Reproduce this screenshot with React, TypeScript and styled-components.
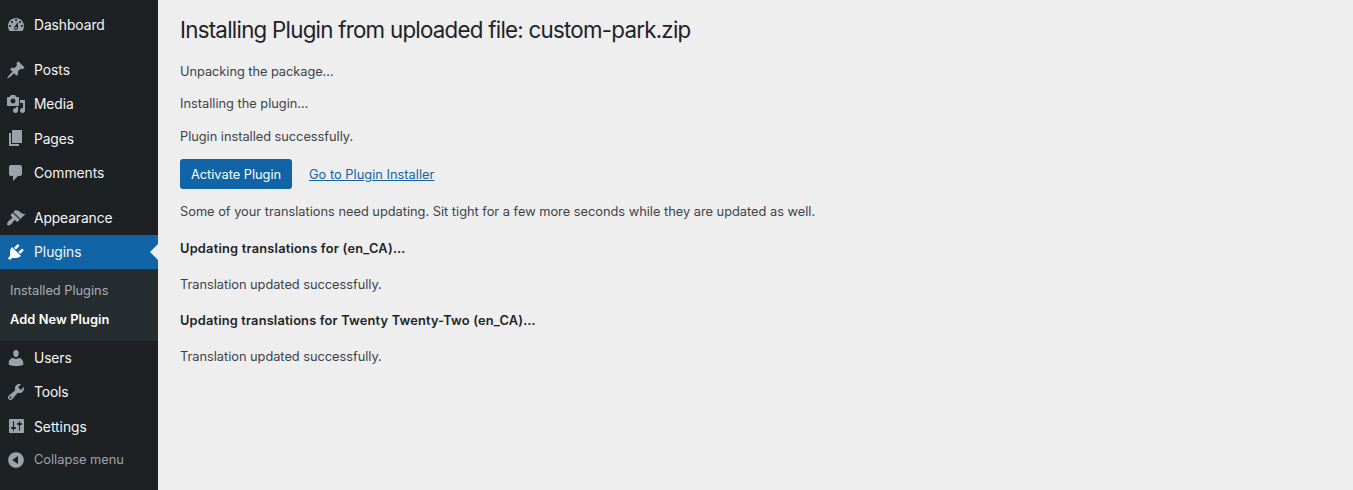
import React from 'react';
import styled, { createGlobalStyle } from 'styled-components';

const GlobalStyle = createGlobalStyle`
  * { box-sizing: border-box; }
  body {
    margin: 0;
    background: #eeeeee;
    color: #3c434a;
    font-family: Inter, "Liberation Sans", sans-serif;
    font-size: 12.8px;
    line-height: 1.4;
    -webkit-font-smoothing: antialiased;
  }
`;

const Page = styled.div`
  display: flex;
  height: 490px;
  overflow: hidden;
`;

const Sidebar = styled.nav`
  flex: none;
  width: 158px;
  padding-top: 7.7px;
  background: #1d2123;
`;

const Separator = styled.div`
  height: 11px;
`;

const Label = styled.span<{ $tracking?: number }>`
  letter-spacing: ${p => p.$tracking ?? 0}px;
`;

const MenuRow = styled.a<{ $current?: boolean; $muted?: boolean }>`
  position: relative;
  display: flex;
  align-items: center;
  height: 34.2px;
  padding-left: 6px;
  gap: 8px;
  white-space: nowrap;
  font-size: ${p => (p.$muted ? 12.8 : 13.8)}px;
  color: ${p => (p.$muted ? '#a0a4a8' : '#f6f6f7')};
  background: ${p => (p.$current ? '#1165a6' : 'transparent')};

  svg {
    flex: none;
    width: 20px;
    height: 20px;
    fill: ${p => (p.$current ? '#ffffff' : '#9ca2a7')};
  }

  ${Label} {
    line-height: 20px;
    padding-top: ${p => (p.$muted ? 0 : 0.5)}px;
  }
`;

const CurrentArrow = styled.i`
  position: absolute;
  right: 0;
  top: 50%;
  margin-top: -8px;
  border: 8px solid transparent;
  border-left-width: 0;
  border-right-color: #eeeeee;
`;

const Submenu = styled.div`
  display: flex;
  flex-direction: column;
  height: 71.8px;
  padding: 7px 0 0 10px;
  background: #262d30;
`;

const SubmenuItem = styled.a<{ $current?: boolean }>`
  height: 29px;
  line-height: 29px;
  white-space: nowrap;
  color: ${p => (p.$current ? '#ffffff' : '#a9adb0')};
  font-weight: ${p => (p.$current ? 600 : 400)};
`;

const Content = styled.main`
  flex: 1;
  padding: 13px 22px 0;
`;

const Title = styled.h1`
  margin: 0;
  height: 34px;
  line-height: 34px;
  font-size: 22.3px;
  font-weight: 400;
  color: #1d2327;
`;

const Message = styled.p<{ $gap: number }>`
  margin: ${p => p.$gap}px 0 0;
  height: 20px;
  line-height: 20px;
`;

const Heading = styled.h2<{ $gap: number }>`
  margin: ${p => p.$gap}px 0 0;
  height: 20px;
  line-height: 20px;
  font-size: 12.8px;
  font-weight: 600;
  color: #1d2327;
`;

const Actions = styled.div`
  display: flex;
  align-items: center;
  gap: 17px;
  margin-top: 12px;
`;

const PrimaryButton = styled.a`
  display: flex;
  align-items: center;
  justify-content: center;
  width: 112px;
  height: 30px;
  padding-top: 2px;
  border-radius: 3px;
  background: #1165a6;
  color: #ffffff;
`;

const TextLink = styled.a`
  padding-top: 2px;
  color: #1165a6;
  text-decoration: underline;
`;

const icons = {
  dashboard:
    'M3.76 16h12.48c1.1-1.37 1.76-3.11 1.76-5 0-4.42-3.58-8-8-8s-8 3.58-8 8c0 1.89.66 3.63 1.76 5zM10 4c.55 0 1 .45 1 1s-.45 1-1 1-1-.45-1-1 .45-1 1-1zM6 6c.55 0 1 .45 1 1s-.45 1-1 1-1-.45-1-1 .45-1 1-1zm8 0c.55 0 1 .45 1 1s-.45 1-1 1-1-.45-1-1 .45-1 1-1zm-5.37 5.55L12 7v6c0 1.1-.9 2-2 2s-2-.9-2-2c0-.57.24-1.08.63-1.45zM4 10c.55 0 1 .45 1 1s-.45 1-1 1-1-.45-1-1 .45-1 1-1zm12 0c.55 0 1 .45 1 1s-.45 1-1 1-1-.45-1-1 .45-1 1-1zm-5 3c0-.55-.45-1-1-1s-1 .45-1 1 .45 1 1 1 1-.45 1-1z',
  posts:
    'M10.44 3.02l1.82-1.82 6.36 6.35-1.83 1.82c-1.05-.68-2.48-.57-3.41.36l-.75.75c-.92.93-1.04 2.35-.35 3.41l-1.83 1.82-2.41-2.41-2.8 2.79c-.42.42-3.38 2.71-3.8 2.29s1.86-3.39 2.28-3.81l2.79-2.79L4.1 9.36l1.83-1.82c1.05.69 2.48.57 3.4-.36l.75-.75c.93-.92 1.05-2.35.36-3.41z',
  media:
    'M13 11V4c0-.55-.45-1-1-1h-1.67L9 1H5L3.67 3H2c-.55 0-1 .45-1 1v7c0 .55.45 1 1 1h10c.55 0 1-.45 1-1zM7 4.5c1.38 0 2.5 1.12 2.5 2.5S8.38 9.5 7 9.5 4.5 8.38 4.5 7 5.62 4.5 7 4.5zM14 6h5v10.5c0 1.38-1.12 2.5-2.5 2.5S14 17.88 14 16.5s1.12-2.5 2.5-2.5c.17 0 .34.02.5.05V9h-3V6zm-4 8.05V13h2v3.5c0 1.38-1.12 2.5-2.5 2.5S7 17.88 7 16.5 8.12 14 9.5 14c.17 0 .34.02.5.05z',
  pages: 'M6 15V2h10v13H6zm-1 1h8v2H3V5h2v11z',
  comments:
    'M5 2h9c1.1 0 2 .9 2 2v7c0 1.1-.9 2-2 2h-2l-5 5v-5H5c-1.1 0-2-.9-2-2V4c0-1.1.9-2 2-2z',
  appearance:
    'M14.48 11.06L7.41 3.99l1.5-1.5c.5-.56 2.3-.47 3.51.32 1.21.8 1.43 1.28 2.91 2.1 1.18.64 2.45 1.26 4.45.85zm-.71.71L6.7 4.7 4.93 6.47c-.39.39-.39 1.02 0 1.41l1.06 1.06c.39.39.39 1.03 0 1.42-.6.6-1.43 1.11-2.21 1.69-.35.26-.7.53-1.01.84C1.43 14.23.4 16.08 1.4 17.07c.99 1 2.84-.03 4.18-1.36.31-.31.58-.66.85-1.02.57-.78 1.08-1.61 1.69-2.21.39-.39 1.02-.39 1.41 0l1.06 1.06c.39.39 1.02.39 1.41 0z',
  plugins:
    'M13.11 4.36L9.87 7.6 8 5.73l3.24-3.24c.35-.34 1.05-.2 1.56.32.52.51.66 1.21.31 1.55zm-8 1.77l.91-1.12 9.01 9.01-1.19.84c-.71.71-2.63 1.16-3.82 1.16H6.14L4.9 17.26c-.59.59-1.54.59-2.12 0-.59-.58-.59-1.53 0-2.12l1.24-1.24v-3.88c0-1.13.4-3.19 1.09-3.89zm7.26 3.97l3.24-3.24c.34-.35 1.04-.21 1.55.31.52.51.66 1.21.31 1.55l-3.24 3.25z',
  users:
    'M10 9.25c-2.27 0-2.73-3.44-2.73-3.44C7 4.02 7.82 2 9.97 2c2.16 0 2.98 2.02 2.71 3.81 0 0-.41 3.44-2.68 3.44zm0 2L12.72 10c2.39 0 4.52 2.33 4.52 4.53v2.49s-3.65 1.13-7.24 1.13c-3.65 0-7.24-1.13-7.24-1.13v-2.49c0-2.25 1.94-4.48 4.47-4.48z',
  tools:
    'M16.68 9.77c-1.34 1.34-3.3 1.67-4.95.99l-5.41 6.52c-.99.99-2.59.99-3.58 0s-.99-2.59 0-3.57l6.52-5.42c-.68-1.65-.35-3.61.99-4.95 1.28-1.28 3.12-1.62 4.72-1.06l-2.89 2.89 2.82 2.82 2.86-2.87c.53 1.58.18 3.39-1.08 4.65zM3.81 16.21c.4.39 1.04.39 1.43 0 .4-.4.4-1.04 0-1.43-.39-.4-1.03-.4-1.43 0-.39.39-.39 1.03 0 1.43z',
  settings:
    'M18 16V4c0-.55-.45-1-1-1H4c-.55 0-1 .45-1 1v12c0 .55.45 1 1 1h13c.55 0 1-.45 1-1zM8 11h1c.55 0 1 .45 1 1s-.45 1-1 1H8v1.5c0 .28-.22.5-.5.5s-.5-.22-.5-.5V13H6c-.55 0-1-.45-1-1s.45-1 1-1h1V5.5c0-.28.22-.5.5-.5s.5.22.5.5V11zm5-2h-1c-.55 0-1-.45-1-1s.45-1 1-1h1V5.5c0-.28.22-.5.5-.5s.5.22.5.5V7h1c.55 0 1 .45 1 1s-.45 1-1 1h-1v5.5c0 .28-.22.5-.5.5s-.5-.22-.5-.5V9z',
  collapse:
    'M10 2.16c4.33 0 7.84 3.51 7.84 7.84s-3.51 7.84-7.84 7.84S2.16 14.33 2.16 10 5.71 2.16 10 2.16zm2 11.72V6.12L6.18 9.97z',
};

type ItemProps = {
  icon: keyof typeof icons;
  label: string;
  tracking?: number;
  current?: boolean;
  muted?: boolean;
};

function MenuItem({ icon, label, tracking, current, muted }: ItemProps) {
  return (
    <MenuRow $current={current} $muted={muted}>
      <svg viewBox="0 0 20 20" aria-hidden="true">
        <path fillRule="evenodd" d={icons[icon]} />
      </svg>
      <Label $tracking={tracking}>{label}</Label>
      {current && <CurrentArrow />}
    </MenuRow>
  );
}

export default function App() {
  return (
    <>
      <GlobalStyle />
      <Page>
        <Sidebar>
          <MenuItem icon="dashboard" label="Dashboard" tracking={-0.05} />
          <Separator />
          <MenuItem icon="posts" label="Posts" />
          <MenuItem icon="media" label="Media" tracking={-0.1} />
          <MenuItem icon="pages" label="Pages" tracking={-0.1} />
          <MenuItem icon="comments" label="Comments" />
          <Separator />
          <MenuItem icon="appearance" label="Appearance" tracking={-0.1} />
          <MenuItem icon="plugins" label="Plugins" current />
          <Submenu>
            <SubmenuItem><Label>Installed Plugins</Label></SubmenuItem>
            <SubmenuItem $current><Label $tracking={0.1}>Add New Plugin</Label></SubmenuItem>
          </Submenu>
          <MenuItem icon="users" label="Users" tracking={-0.1} />
          <MenuItem icon="tools" label="Tools" tracking={-0.1} />
          <MenuItem icon="settings" label="Settings" />
          <MenuItem icon="collapse" label="Collapse menu" muted />
        </Sidebar>
        <Content>
          <Title><Label $tracking={-0.74}>Installing Plugin from uploaded file: custom-park.zip</Label></Title>
          <Message $gap={15}><Label $tracking={-0.04}>Unpacking the package…</Label></Message>
          <Message $gap={12}><Label>Installing the plugin…</Label></Message>
          <Message $gap={13}><Label $tracking={-0.02}>Plugin installed successfully.</Label></Message>
          <Actions>
            <PrimaryButton><Label>Activate Plugin</Label></PrimaryButton>
            <TextLink><Label $tracking={0.03}>Go to Plugin Installer</Label></TextLink>
          </Actions>
          <Message $gap={13}><Label>Some of your translations need updating. Sit tight for a few more seconds while they are updated as well.</Label></Message>
          <Heading $gap={17}><Label $tracking={0.23}>Updating translations for (en_CA)…</Label></Heading>
          <Message $gap={16}><Label $tracking={-0.02}>Translation updated successfully.</Label></Message>
          <Heading $gap={16}><Label $tracking={0.18}>Updating translations for Twenty Twenty-Two (en_CA)…</Label></Heading>
          <Message $gap={16}><Label $tracking={-0.02}>Translation updated successfully.</Label></Message>
        </Content>
      </Page>
    </>
  );
}
